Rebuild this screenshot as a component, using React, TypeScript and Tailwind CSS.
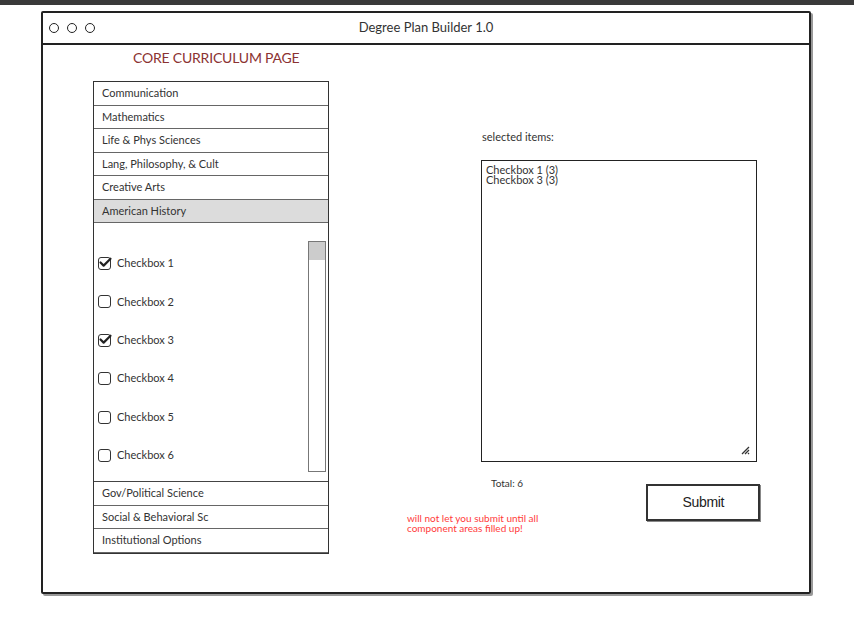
import { Check } from "lucide-react";

const topItems = [
  "Communication",
  "Mathematics",
  "Life & Phys Sciences",
  "Lang, Philosophy, & Cult",
  "Creative Arts",
];

const bottomItems = ["Gov/Political Science", "Social & Behavioral Sc", "Institutional Options"];

const boxes = [
  { label: "Checkbox 1", checked: true },
  { label: "Checkbox 2", checked: false },
  { label: "Checkbox 3", checked: true },
  { label: "Checkbox 4", checked: false },
  { label: "Checkbox 5", checked: false },
  { label: "Checkbox 6", checked: false },
];

function Row({ label, active }: { label: string; active?: boolean }) {
  return (
    <div
      className={`h-[23.5px] flex items-center pl-2 border-b border-[#666] text-[11px] text-[#333] ${
        active ? "bg-[#dcdcdc]" : "bg-white"
      }`}
    >
      {label}
    </div>
  );
}

export default function App() {
  return (
    <div className="w-[854px] h-[617px] bg-white relative font-['Lato','Open_Sans',sans-serif] text-[#333]">
      <div className="h-[5px] bg-[#3a3a3a]" />
      <div className="pl-[41px] pt-[6px]">
        <div className="w-[770px] h-[583px] border-2 border-[#222] rounded-[2px] shadow-[2px_2px_0_#999] flex flex-col">
          {/* title bar */}
          <div className="h-[32px] border-b-2 border-[#222] flex items-center relative">
            <div className="flex gap-[8px] pl-[6px]">
              <span className="w-[10px] h-[10px] rounded-full border-[1.5px] border-[#222]" />
              <span className="w-[10px] h-[10px] rounded-full border-[1.5px] border-[#222]" />
              <span className="w-[10px] h-[10px] rounded-full border-[1.5px] border-[#222]" />
            </div>
            <div className="absolute inset-0 flex items-center justify-center text-[13px] text-[#333]">
              Degree Plan Builder 1.0
            </div>
          </div>

          <div className="flex flex-1">
            {/* left column */}
            <div className="pl-[50px] w-[290px] flex flex-col">
              <div className="pl-[40px] h-[25px] flex items-center text-[14px] text-[#8b3232] tracking-[-0.2px]">
                CORE CURRICULUM PAGE
              </div>
              <div className="mt-[11px] w-[236px] border border-[#333] border-b-0 shadow-[0_1px_0_#333]">
                {topItems.map((t) => (
                  <Row key={t} label={t} />
                ))}
                <Row label="American History" active />
                <div className="h-[259px] border-b border-[#444] flex pr-[2px]">
                  <div className="flex-1 pt-[34px] pl-[4px] flex flex-col gap-[25.4px]">
                    {boxes.map((b) => (
                      <div key={b.label} className="flex items-center gap-[6px] h-[13px] text-[11px]">
                        <span className="w-[13px] h-[13px] border-[1.5px] border-[#333] rounded-[3px] bg-white relative">
                          {b.checked && (
                            <Check
                              className="absolute -top-[3px] -left-[1px] text-[#222]"
                              size={15}
                              strokeWidth={3.5}
                            />
                          )}
                        </span>
                        <span>{b.label}</span>
                      </div>
                    ))}
                  </div>
                  <div className="mt-[18px] mb-[9px] w-[18px] border border-[#777] bg-white">
                    <div className="h-[18px] bg-[#cccccc]" />
                  </div>
                </div>
                {bottomItems.map((t) => (
                  <Row key={t} label={t} />
                ))}
              </div>
            </div>

            {/* right column */}
            <div className="flex-1 pl-[148px] pt-[84px] flex flex-col">
              <div className="pl-[1px] text-[11px] text-[#333]">selected items:</div>
              <div className="mt-[14px] w-[276px] h-[302px] border border-[#222] relative px-[4px] pt-[4px] text-[11px] leading-[10.5px] text-[#333]">
                <div>Checkbox 1 (3)</div>
                <div>Checkbox 3 (3)</div>
                <svg className="absolute right-[6px] bottom-[6px]" width="10" height="10" viewBox="0 0 10 10">
                  <path d="M2 9 L9 2 M5 9 L9 5 M8 9 L9 8" stroke="#333" strokeWidth="1.3" fill="none" />
                </svg>
              </div>
              <div className="pl-[10px] mt-[14px] text-[10px]">Total: 6</div>
              <div className="flex items-start">
                <div className="ml-[-74px] mt-[22px] text-[10px] leading-[10.5px] text-[#ff3b3b]">
                  <div>will not let you submit until all</div>
                  <div>component areas filled up!</div>
                </div>
                <div className="ml-[108px] -mt-[7px] w-[114px] h-[37px] border-2 border-[#333] shadow-[1px_1px_0_#888] flex items-center justify-center text-[14px] text-[#222] font-['Liberation_Sans',sans-serif] tracking-[-0.3px]">
                  Submit
                </div>
              </div>
            </div>
          </div>
        </div>
      </div>
    </div>
  );
}
